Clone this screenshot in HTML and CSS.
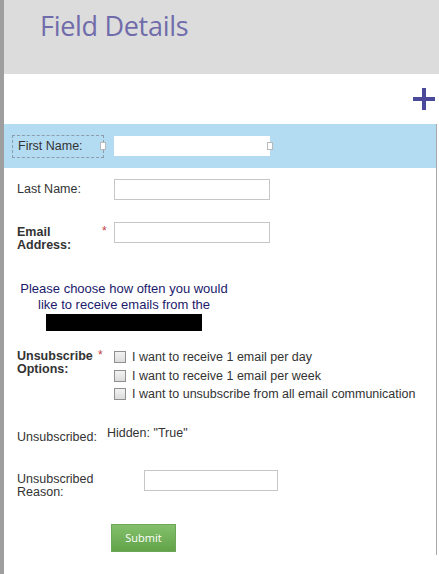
FILE: index.html
```html
<!DOCTYPE html>
<html>
<head>
<meta charset="utf-8">
<link rel="stylesheet" href="styles.css">
</head>
<body>
<div class="page">
  <div class="rail"></div>
  <div class="main">
    <header class="header"><h1 class="title">Field Details</h1></header>
    <div class="toolbar">
      <svg class="plus" width="22" height="22" viewBox="0 0 22 22"><path d="M9 0h4v9h9v4h-9v9H9v-9H0V9h9z" fill="#4b4a9a"/></svg>
    </div>
    <form class="form">
      <div class="row row-selected">
        <div class="label-box">First Name:<span class="handle handle-l"></span></div>
        <div class="input-wrap"><input class="input input-sel" type="text"><span class="handle handle-r"></span></div>
      </div>
      <div class="row row-last">
        <label class="label">Last Name:</label>
        <input class="input" type="text">
      </div>
      <div class="row row-email">
        <label class="label bold">Email<br>Address:</label>
        <span class="req">*</span>
        <input class="input" type="text">
      </div>
      <div class="notice">
        <p class="notice-text">Please choose how often you would<br>like to receive emails from the</p>
        <div class="redact"></div>
      </div>
      <div class="row row-unsub">
        <label class="label bold">Unsubscribe<br>Options:</label>
        <span class="req req-unsub">*</span>
        <div class="checks">
          <div class="check"><span class="box"></span>I want to receive 1 email per day</div>
          <div class="check"><span class="box"></span>I want to receive 1 email per week</div>
          <div class="check"><span class="box"></span>I want to unsubscribe from all email communication</div>
        </div>
      </div>
      <div class="row row-hidden">
        <span class="label label-hidden">Unsubscribed:</span>
        <span class="hidden-val">Hidden: "True"</span>
      </div>
      <div class="row row-reason">
        <label class="label label-reason">Unsubscribed<br>Reason:</label>
        <input class="input input-reason" type="text">
      </div>
      <div class="row row-submit">
        <button class="submit" type="button">Submit</button>
      </div>
    </form>
  </div>
</div>
</body>
</html>
```
FILE: styles.css
```css
* { box-sizing: border-box; }
html, body { margin: 0; padding: 0; background: #fff; }
body { font-family: "Liberation Sans", Arial, sans-serif; color: #333; width: 439px; height: 574px; overflow: hidden; }

.page { display: flex; height: 574px; }
.rail { width: 4px; background: #9e9e9e; flex: none; }
.main { flex: 1; display: flex; flex-direction: column; min-width: 0; }

.header { flex: none; height: 74px; background: #dcdcdc; padding: 8px 0 0 36px; }
.title { margin: 0; font-family: "Open Sans", sans-serif; font-weight: 400; font-size: 27px; line-height: 36px; color: #706cab; letter-spacing: -0.3px; }

.toolbar { flex: none; height: 50px; display: flex; justify-content: flex-end; align-items: flex-start; padding: 14px 4px 0 0; }

.form { flex: 1; min-height: 0; margin-right: 2px; border-right: 1px solid #a8a8a8; margin-bottom: 19px; }

.row { display: flex; align-items: flex-start; padding-left: 13px; }
.label { width: 97px; font-size: 12.5px; line-height: 13px; color: #333; flex: none; }
.bold { font-weight: bold; }

.input { width: 156px; height: 21px; border: 1px solid #c6c6c6; background: #fff; margin: 0; padding: 0; display: block; }

.row-selected { background: #b3dcf3; height: 44px; align-items: center; padding-left: 8px; }
.label-box { position: relative; width: 92px; height: 23px; border: 1px dashed #8c9cad; font-size: 12.5px; line-height: 21px; padding-left: 5px; color: #333; }
.input-wrap { position: relative; margin-left: 10px; }
.input-sel { border: none; height: 20px; }
.handle { position: absolute; width: 6px; height: 8px; background: #fff; border: 1px solid #b9b9b9; top: 50%; margin-top: -4px; }
.handle-l { right: -3px; }
.handle-r { right: -3px; }

.row-last { margin-top: 11px; align-items: center; }
.row-email { margin-top: 22px; }
.row-email .label { margin-top: 4px; line-height: 13px; }
.req { position: absolute; color: #c23b3b; font-size: 12px; margin-left: 85px; }
.row-email .req { margin-top: 2px; }

.notice { width: 216px; text-align: center; margin-top: 29px; margin-left: 12px; }
.notice-text { margin: 0; font-size: 13px; line-height: 16px; color: #1b1a6b; }
.redact { width: 156px; height: 17px; background: #000; margin: 1px 0 0 30px; }

.row-unsub { margin-top: 17px; }
.row-unsub .label { margin-top: 2px; }
.req-unsub { margin-left: 81px; margin-top: 0; }
.checks { display: flex; flex-direction: column; }
.check { display: flex; align-items: center; font-size: 12.5px; line-height: 12px; height: 18.5px; color: #333; }
.box { width: 12px; height: 12px; border: 1px solid #8f8f8f; background: linear-gradient(#f2f2f2, #dcdcdc); margin-right: 6px; flex: none; }

.row-hidden { margin-top: 23px; }
.label-hidden { width: auto; margin-top: 4px; margin-right: 10px; }
.hidden-val { font-size: 12.5px; line-height: 13px; }

.row-reason { margin-top: 26px; }
.label-reason { width: 127px; margin-top: 3px; }
.input-reason { width: 134px; height: 21px; }

.row-submit { margin-top: 25px; padding-left: 107px; }
.submit { width: 65px; height: 28px; border: 1px solid #6da656; background: linear-gradient(#84c06c, #62a348); color: #fff; font-family: "Open Sans", sans-serif; font-size: 11px; padding: 0; }
```
